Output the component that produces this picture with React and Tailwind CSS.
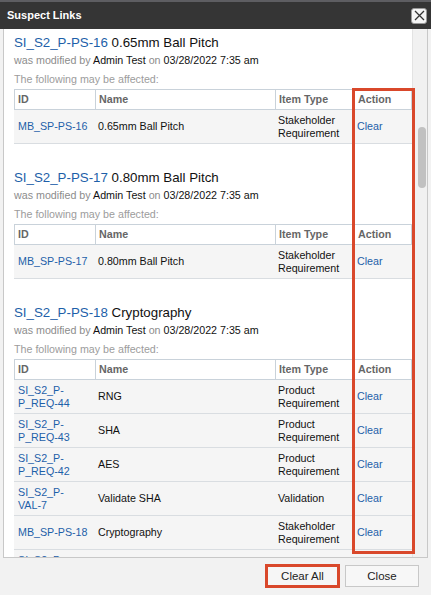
import React from 'react';

const sections = [
  {
    id: 'SI_S2_P-PS-16',
    title: '0.65mm Ball Pitch',
    rows: [{ id: ['MB_SP-PS-16'], name: '0.65mm Ball Pitch', type: 'Stakeholder Requirement' }],
  },
  {
    id: 'SI_S2_P-PS-17',
    title: '0.80mm Ball Pitch',
    rows: [{ id: ['MB_SP-PS-17'], name: '0.80mm Ball Pitch', type: 'Stakeholder Requirement' }],
  },
  {
    id: 'SI_S2_P-PS-18',
    title: 'Cryptography',
    rows: [
      { id: ['SI_S2_P-', 'P_REQ-44'], name: 'RNG', type: 'Product Requirement' },
      { id: ['SI_S2_P-', 'P_REQ-43'], name: 'SHA', type: 'Product Requirement' },
      { id: ['SI_S2_P-', 'P_REQ-42'], name: 'AES', type: 'Product Requirement' },
      { id: ['SI_S2_P-', 'VAL-7'], name: 'Validate SHA', type: 'Validation' },
      { id: ['MB_SP-PS-18'], name: 'Cryptography', type: 'Stakeholder Requirement' },
    ],
    // row that is cut off by the bottom of the scroll panel
    partial: 'SI_S2_P-',
  },
];

const cols = 'grid grid-cols-[81px_180px_78px_59px]';

const Section = ({ section, first }) => (
  <div className={first ? '' : 'pt-[25px]'}>
    {/* Heading */}
    <div className="text-[13.3px] leading-[18px] text-[#111]">
      <span className="text-[#1d5fa9]">{section.id}</span> {section.title}
    </div>
    <div className="mt-[1px] text-[10.7px] leading-[14px] text-[#8c8c8c]">
      was modified by <span className="text-[#111]">Admin Test</span> on{' '}
      <span className="text-[#111]">03/28/2022 7:35 am</span>
    </div>
    <div className="mt-[5px] text-[10.7px] leading-[14px] text-[#9c9c9c]">
      The following may be affected:
    </div>

    {/* Affected items */}
    <div className="mt-[3px] w-[398px] text-[10.7px] leading-[13px]">
      <div className={`${cols} h-[21px] items-stretch border border-[#c9d2da] bg-white font-bold text-[#666]`}>
        <div className="flex items-center border-r border-[#c9d2da] pl-[3px]">ID</div>
        <div className="flex items-center border-r border-[#c9d2da] pl-[3px]">Name</div>
        <div className="flex items-center border-r border-[#c9d2da] pl-[3px]">Item Type</div>
        <div className="flex items-center pl-[4px]">Action</div>
      </div>
      {section.rows.map((row, i) => (
        <div
          key={i}
          className={`${cols} h-[34px] shrink-0 items-center border-b border-[#d9dde1] bg-[#f5f5f5] text-[#111]`}
        >
          <div className="pl-[4px] text-[#1d5fa9]">
            {row.id.map((line) => (
              <div key={line}>{line}</div>
            ))}
          </div>
          <div className="pl-[3px]">{row.name}</div>
          <div className="pl-[3px] pr-[2px]">{row.type}</div>
          <div className="pl-[4px] text-[#1d5fa9]">Clear</div>
        </div>
      ))}
      {section.partial && (
        <div className="h-[34px] bg-[#f5f5f5] pl-[4px] pt-[4px] text-[#1d5fa9]">{section.partial}</div>
      )}
    </div>
  </div>
);

export default function App() {
  return (
    <div className="relative flex h-[595px] w-[431px] flex-col overflow-hidden bg-[#f2f2f2] font-['Liberation_Sans',Arial,sans-serif]">
      {/* Title bar */}
      <div className="flex h-[29px] shrink-0 items-center justify-between border-t-2 border-[#5e5e62] bg-[#353535] pl-[7px] pr-[4px]">
        <span className="text-[11px] font-bold text-white">Suspect Links</span>
        <button className="flex h-[16px] w-[16px] items-center justify-center rounded-[3px] border border-[#999] bg-[#f4f4f4]">
          <svg width="11" height="11" viewBox="0 0 11 11">
            <path d="M1 1 L10 10 M10 1 L1 10" stroke="#333" strokeWidth="1.3" />
          </svg>
        </button>
      </div>

      {/* Scroll panel */}
      <div className="mx-[3px] flex h-[529px] shrink-0 border-x border-b border-[#c8c8c8] bg-white">
        <div className="flex-1 overflow-hidden pl-[10px] pt-[5px]">
          {sections.map((s, i) => (
            <Section key={s.id} section={s} first={i === 0} />
          ))}
        </div>
        <div className="w-[15px] shrink-0 border-l border-[#e3e3e3] bg-[#f1f1f1] pl-[5px]">
          <div className="mt-[98px] h-[61px] w-[8px] rounded-full bg-[#c1c1c1]" />
        </div>
      </div>

      {/* Footer */}
      <div className="flex flex-1 items-center justify-end gap-[5px] pr-[12px] pb-[2px] text-[11.5px] leading-[14px] text-[#222]">
        <div className="border-[3px] border-[#d9482b]">
          <button className="flex h-[18px] w-[69px] items-center justify-center bg-[#f6f6f6]">Clear All</button>
        </div>
        <button className="flex h-[22px] w-[74px] items-center justify-center border border-[#c8c8c8] bg-[#f7f7f7]">
          Close
        </button>
      </div>

      {/* Annotation around the Action column */}
      <div className="pointer-events-none absolute left-[352px] top-[88px] h-[466px] w-[63px] border-[3px] border-[#d9482b]" />
    </div>
  );
}
